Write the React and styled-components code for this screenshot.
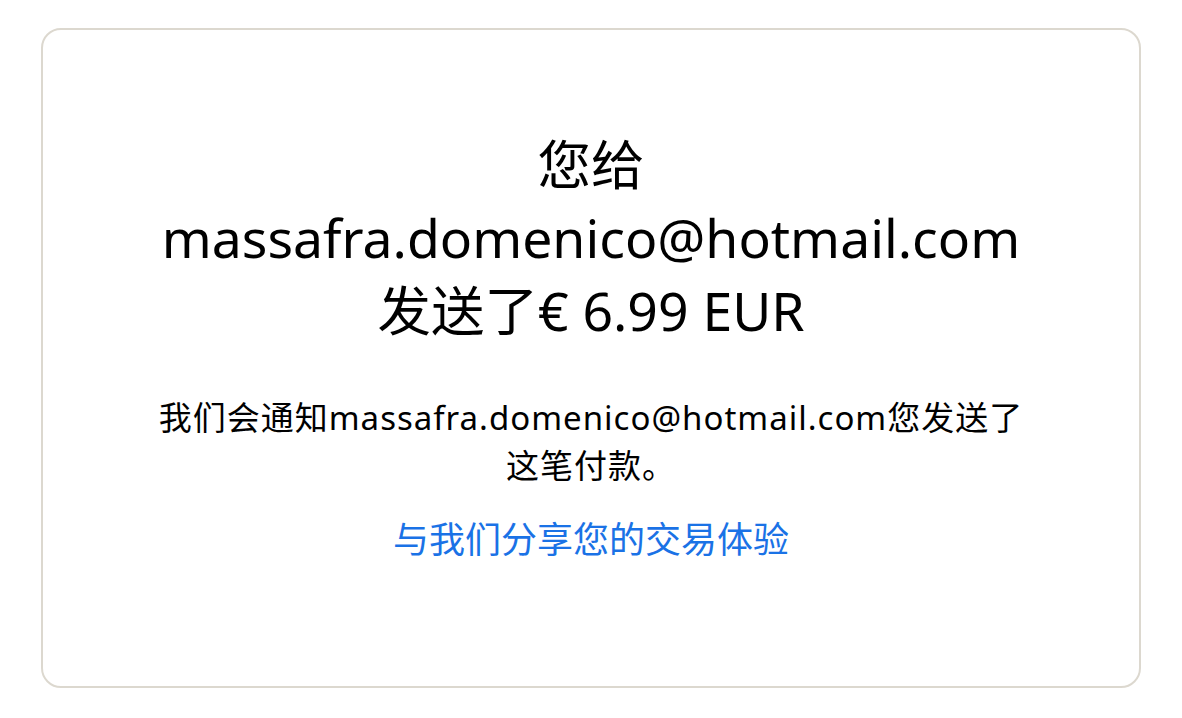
import React from 'react';
import styled, { createGlobalStyle } from 'styled-components';

const GlobalStyle = createGlobalStyle`
  html, body {
    margin: 0;
    padding: 0;
    background: #ffffff;
  }
  body {
    font-family: "Noto Sans", "Noto Sans CJK SC", sans-serif;
    color: #000000;
  }
`;

const Page = styled.div`
  padding: 28px 41px 30px 41px;
`;

const Card = styled.section`
  box-sizing: border-box;
  height: 660px;
  border: 2px solid #dcd8cf;
  border-radius: 20px;
  display: flex;
  flex-direction: column;
  align-items: center;
  padding-top: 98px;
  text-align: center;
`;

const Heading = styled.h1`
  margin: 0;
  font-family: "Noto Sans", "Noto Sans CJK SC", sans-serif;
  font-weight: 400;
  font-size: 53.5px;
  line-height: 73px;
  color: #000000;
  max-width: 920px;
`;

const Message = styled.p`
  margin: 47px 0 0 0;
  max-width: 880px;
  font-size: 33px;
  letter-spacing: 1px;
  line-height: 48px;
  color: #000000;
`;

const ShareLink = styled.a`
  margin-top: 26px;
  font-size: 36px;
  line-height: 48px;
  color: #1a72e6;
  text-decoration: none;
  cursor: pointer;
`;

const email = 'massafra.domenico@hotmail.com';

export default function App() {
  return (
    <>
      <GlobalStyle />
      <Page>
        <Card>
          <Heading>
            您给
            <br />
            {email}
            <br />
            发送了€ 6.99 EUR
          </Heading>
          <Message>我们会通知{email}您发送了这笔付款。</Message>
          <ShareLink>与我们分享您的交易体验</ShareLink>
        </Card>
      </Page>
    </>
  );
}
